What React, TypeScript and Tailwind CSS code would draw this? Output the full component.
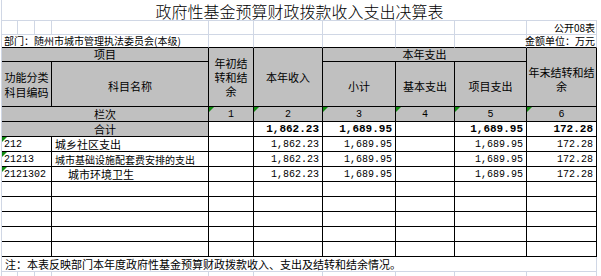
import React from "react";

const G = "border-[#d0d7e5]";

function Tri() {
  return (
    <span className="absolute left-0 top-0 w-0 h-0 border-t-[5px] border-r-[5px] border-t-[#118c11] border-r-transparent" />
  );
}

const hdr = "bg-[#c0c0c0] border-r border-b border-black flex justify-center text-center leading-[14px]";
const cell = "relative border-r border-b border-black bg-white flex items-end pb-[1px] leading-none";
const mono = "font-['Liberation_Mono',monospace]";

type Row = { code: string; name: string; indent?: boolean; small?: boolean };

const rows: Row[] = [
  { code: "212", name: "城乡社区支出" },
  { code: "21213", name: "城市基础设施配套费安排的支出", small: true },
  { code: "2121302", name: "城市环境卫生", indent: true },
];

function Num({ v, bold }: { v?: string; bold?: boolean }) {
  return (
    <div className={`${cell} justify-end pr-[3px] ${mono} ${bold ? "font-bold text-[11px]" : "text-[10px]"}`}>
      {v}
    </div>
  );
}

export default function App() {
  return (
    <div className="w-[601px] h-[276px] overflow-hidden bg-white font-['Noto_Sans_CJK_SC','Liberation_Sans',sans-serif] text-black">
      <div className={`ml-px border-l ${G} w-[597px] grid grid-cols-[16px_17px_17px_157px_45px_69px_73px_59px_72px_70px] grid-rows-[21px_14px_13px_14px_45px_15px_repeat(9,15px)_15px_6px] text-[11px]`}>
        {/* title */}
        <div className={`col-span-10 border-b ${G} flex items-end justify-center pb-[1px] text-[16px] leading-none font-light`}>
          政府性基金预算财政拨款收入支出决算表
        </div>
        {/* row 2 */}
        {Array.from({ length: 9 }).map((_, i) => (
          <div key={i} className={`border-r border-b ${G}`} />
        ))}
        <div className={`border-r border-b ${G} flex items-end justify-end pr-[1px] text-[10px] leading-none pb-[1px]`}>
          公开08表
        </div>
        {/* row 3 */}
        <div className={`col-span-4 border-r border-r-[#d0d7e5] border-b border-b-black flex items-end pl-[2px] text-[10px] leading-none pb-[1px] whitespace-nowrap`}>
          部门：随州市城市管理执法委员会(本级)
        </div>
        {Array.from({ length: 5 }).map((_, i) => (
          <div key={i} className="border-r border-r-[#d0d7e5] border-b border-b-black" />
        ))}
        <div className="border-r border-r-[#d0d7e5] border-b border-b-black flex items-end justify-end pr-[1px] text-[10px] leading-none pb-[1px] whitespace-nowrap">
          金额单位：万元
        </div>
        {/* header row A */}
        <div className={`${hdr} col-span-4 items-end`}>项目</div>
        <div className={`${hdr} row-span-2 items-center`}>
          年初结<br />转和结<br />余
        </div>
        <div className={`${hdr} row-span-2 items-center`}>本年收入</div>
        <div className={`${hdr} col-span-3 items-end`}>本年支出</div>
        <div className={`${hdr} row-span-2 items-center pt-[3px]`}>
          年末结转和结<br />余
        </div>
        {/* header row B */}
        <div className={`${hdr} col-span-3 items-center pt-[2px] leading-[15px]`}>
          功能分类<br />科目编码
        </div>
        <div className={`${hdr} items-center pt-[4px]`}>科目名称</div>
        <div className={`${hdr} items-center pt-[4px]`}>小计</div>
        <div className={`${hdr} items-center pt-[4px]`}>基本支出</div>
        <div className={`${hdr} items-center pt-[4px]`}>项目支出</div>
        {/* 栏次 */}
        <div className={`${hdr} col-span-4 items-end`}>栏次</div>
        {["1", "2", "3", "4", "5", "6"].map((n) => (
          <div key={n} className={`${hdr} relative items-end ${mono} text-[10px] leading-none pb-[1px]`}>
            <Tri />
            {n}
          </div>
        ))}
        {/* 合计 */}
        <div className="col-span-4 bg-[#c0c0c0] border-r border-b border-black flex items-center justify-center leading-none">
          合计
        </div>
        <Num />
        <Num v="1,862.23" bold />
        <Num v="1,689.95" bold />
        <Num />
        <Num v="1,689.95" bold />
        <Num v="172.28" bold />
        {/* data rows */}
        {rows.map((r) => (
          <React.Fragment key={r.code}>
            <div className={`${cell} col-span-3 pl-[2px] ${mono} text-[10px]`}>
              <Tri />
              {r.code}
            </div>
            <div className={`${cell} pl-[3px] whitespace-nowrap ${r.small ? "text-[10px]" : ""} ${r.indent ? "pl-[16px]" : ""}`}>
              {r.name}
            </div>
            <Num />
            <Num v="1,862.23" />
            <Num v="1,689.95" />
            <Num />
            <Num v="1,689.95" />
            <Num v="172.28" />
          </React.Fragment>
        ))}
        {/* empty rows */}
        {Array.from({ length: 5 }).map((_, i) => (
          <React.Fragment key={i}>
            <div className={`${cell} col-span-3`} />
            <div className={cell} />
            <div className={cell} />
            <div className={cell} />
            <div className={cell} />
            <div className={cell} />
            <div className={cell} />
            <div className={cell} />
          </React.Fragment>
        ))}
        {/* note */}
        <div className={`col-span-10 border-r border-b ${G} flex items-end pl-[3px] pb-[1px] leading-none whitespace-nowrap`}>
          注：本表反映部门本年度政府性基金预算财政拨款收入、支出及结转和结余情况。
        </div>
        {/* bottom gridline row */}
        {Array.from({ length: 10 }).map((_, i) => (
          <div key={i} className={`border-r ${G}`} />
        ))}
      </div>
    </div>
  );
}
